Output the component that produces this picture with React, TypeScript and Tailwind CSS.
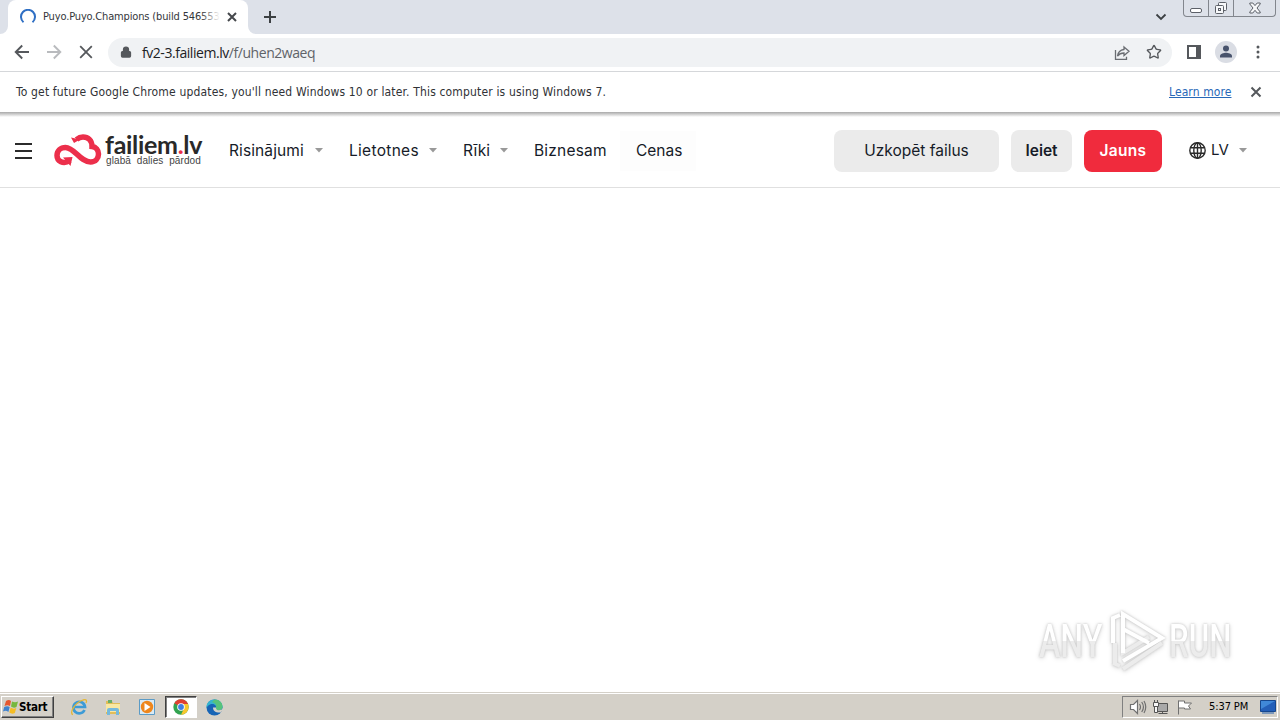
import type { ReactNode } from "react";
import { Lock, Star } from "lucide-react";
import { clsx } from "clsx";

const NAV_ITEMS = [
  { label: "Risinājumi", menu: true, width: "w-[120px]", tracking: "tracking-[0.1px]" },
  { label: "Lietotnes", menu: true, width: "w-[114px]", tracking: "tracking-[0.3px]" },
  { label: "Rīki", menu: true, width: "w-[71px]", tracking: "tracking-[-0.1px]" },
  { label: "Biznesam", menu: false, width: "w-[86px]", tracking: "tracking-[0.2px]" },
];

function Caret() {
  return (
    <svg width="8" height="5" viewBox="0 0 8 5" className="shrink-0">
      <path d="M0 0h8L4 4.5z" fill="#999" />
    </svg>
  );
}

function TabStrip() {
  return (
    <div className="flex h-[34px] items-start bg-[#dde1e9]">
      <div className="relative ml-2 flex h-[34px] w-[240px] items-center rounded-t-lg bg-white pl-3">
        <svg width="8" height="8" className="absolute bottom-0 -left-2">
          <path d="M8 0v8H0a8 8 0 0 0 8-8" fill="#fff" />
        </svg>
        <svg width="8" height="8" className="absolute -right-2 bottom-0">
          <path d="M0 0v8h8a8 8 0 0 1-8-8" fill="#fff" />
        </svg>
        <svg width="16" height="16" viewBox="0 0 16 16" className="shrink-0">
          <path d="M3.500 13.200A7 7 0 1 1 12.500 13.200" fill="none" stroke="#2f6fc4" strokeWidth="2" />
        </svg>
        <div className="relative ml-[7px] w-[177px] overflow-hidden text-[11px] leading-4 tracking-[-0.15px] whitespace-nowrap text-[#34363a]">
          Puyo.Puyo.Champions (build 546553
          <span className="absolute inset-y-0 right-0 w-5 bg-linear-to-r from-transparent to-white" />
        </div>
        <svg width="10" height="10" viewBox="0 0 10 10" stroke="#45484c" strokeWidth="2" className="ml-[7px] shrink-0">
          <path d="m1 1 8 8M9 1 1 9" />
        </svg>
      </div>
      <svg width="14" height="14" viewBox="0 0 14 14" className="mt-[10px] ml-[15px]">
        <path d="M7 1v12M1 7h12" stroke="#3c4043" strokeWidth="2" />
      </svg>
      <svg width="12" height="8" viewBox="0 0 12 8" className="mt-[13px] ml-auto">
        <path d="M1.500 1.500 6 6l4.500-4.500" fill="none" stroke="#3c4043" strokeWidth="1.800" />
      </svg>
      <div className="mr-[4px] ml-[16px] flex h-[17px] w-[93px] rounded-b-[4px] border border-t-0 border-[#82868d] text-[#5c6068]">
        <div className="flex w-[25px] items-end justify-center border-r border-[#82868d] pb-[3px]">
          <span className="h-[5px] w-[12px] rounded-[2px] border border-[#5c6068] bg-white" />
        </div>
        <div className="flex w-[25px] items-center justify-center border-r border-[#82868d]">
          <svg width="14" height="14" viewBox="0 0 14 14" fill="#f7f8fa" stroke="currentColor">
            <rect x="4.500" y="1.500" width="8" height="8" rx="1" />
            <rect x="1.500" y="4.500" width="8" height="8" rx="1" />
            <rect x="4.500" y="7.500" width="2" height="2" />
          </svg>
        </div>
        <div className="flex flex-1 items-center justify-center">
          <svg width="12" height="12" viewBox="0 0 12 12" fill="#f7f8fa" stroke="currentColor">
            <path d="M.8 1h3L6 3.600 8.200 1h3v1L8 6l3.200 4v1h-3L6 8.300 3.800 11h-3v-1L4 6 .8 2z" />
          </svg>
        </div>
      </div>
    </div>
  );
}

function Toolbar() {
  return (
    <div className="flex h-[38px] items-center border-b border-[#d5d7da] bg-white">
      <svg width="16" height="16" viewBox="0 0 16 16" fill="none" stroke="#55585c" strokeWidth="1.900" className="mb-px ml-[14px]">
        <path d="M15 8H2M8.200 1.500 1.700 8l6.500 6.500" />
      </svg>
      <svg width="16" height="16" viewBox="0 0 16 16" fill="none" stroke="#b9bbbe" strokeWidth="1.900" className="mb-px ml-[16px]">
        <path d="M1 8h13M7.800 1.500 14.300 8l-6.500 6.500" />
      </svg>
      <svg width="14" height="14" viewBox="0 0 14 14" stroke="#55585c" strokeWidth="1.800" className="mb-px ml-[17px]">
        <path d="m1.200 1.200 11.600 11.600M12.800 1.200 1.200 12.800" />
      </svg>
      <div className="ml-[15px] flex h-[29px] w-[1064px] items-center rounded-full bg-[#f0f2f4] pl-[12px]">
        <Lock size={12} strokeWidth={2.5} className="mb-px fill-[#55585c] text-[#55585c]" />
        <span className="ml-[10px] w-[176px] font-['Open_Sans','Noto_Sans',sans-serif] text-[14px] leading-5 tracking-[-0.45px] whitespace-nowrap text-[#5f6368]">
          <span className="text-[#202124]">fv2-3.failiem.lv</span>/f/uhen2waeq
        </span>
        <svg width="16" height="16" viewBox="0 0 16 16" fill="none" stroke="#6a6d72" strokeWidth="1.300" className="ml-auto">
          <path d="M1.500 5v9.300h11v-2.500M10 2l5 4.300-5 4.200V8c-3 0-5 1-6.500 3C4 7.500 6 5 10 4.500z" />
        </svg>
        <Star size={16} strokeWidth={2} className="mr-[10px] mb-px ml-[16px] text-[#55585c]" />
      </div>
      <svg width="14" height="14" viewBox="0 0 14 14" className="mb-[2px] ml-[15px]">
        <path d="M1 1h12v12H1z" fill="none" stroke="#55585c" strokeWidth="2" />
        <path d="M9 1h4v12H9z" fill="#55585c" />
      </svg>
      <svg width="22" height="22" viewBox="0 0 22 22" className="mb-[2px] ml-[14px]">
        <circle cx="11" cy="11" r="11" fill="#dadde4" />
        <circle cx="11" cy="7.500" r="3" fill="#48536c" />
        <path d="M5 16.500v-1.500c0-2.200 4-3.200 6-3.200s6 1 6 3.200v1.500z" fill="#48536c" />
      </svg>
      <svg width="4" height="14" viewBox="0 0 4 14" fill="#55585c" className="mb-px ml-[19px]">
        <circle cx="2" cy="2" r="1.500" />
        <circle cx="2" cy="7" r="1.500" />
        <circle cx="2" cy="12" r="1.500" />
      </svg>
    </div>
  );
}

function UpdateNotice() {
  return (
    <div className="flex h-[40px] items-center bg-white px-4 text-[12px] leading-4 text-[#303236]">
      <span className="w-[700px] tracking-[0.16px] whitespace-nowrap">
        To get future Google Chrome updates, you'll need Windows 10 or later. This computer is using Windows 7.
      </span>
      <a className="ml-auto w-[63px] tracking-[0.1px] whitespace-nowrap text-[#2768b8] underline">Learn more</a>
      <svg width="12" height="12" viewBox="0 0 12 12" stroke="#55585c" strokeWidth="2" className="mr-[2px] ml-[18px]">
        <path d="m1.500 1.500 9 9M10.500 1.500l-9 9" />
      </svg>
    </div>
  );
}

function Logo() {
  return (
    <div className="flex h-[34px] w-[150px] items-start">
      <svg width="48" height="34" viewBox="0 0 48 34" className="shrink-0">
        <path
          d="M16 27.500C9 32 3 28 3 22.500 3 18 6.500 14.500 11.500 14.500c9 0 14.500 14.500 25 14.500 5 0 8-3.500 8-8 0-4-2.500-7-6.500-7.500C38 7.500 34 4 29 4c-3 0-4.500.8-6.500 2.500"
          fill="none"
          stroke="#ec2f4b"
          strokeWidth="5.500"
        />
        <path d="m9 24.500 9.500-.5-2 9zM17 4.500l3 5.500 6-3.500z" fill="#ec2f4b" />
      </svg>
      <div className="ml-[3px]">
        <div className="h-[23px] w-[100px] font-['Lato',sans-serif] text-[25px] leading-[23px] font-bold tracking-[-0.3px] whitespace-nowrap text-[#292929]">
          failiem<span className="text-[#ec2f4b]">.</span>lv
        </div>
        <div className="ml-px font-['Liberation_Sans',sans-serif] text-[10px] leading-[10px] tracking-[0.1px] whitespace-pre text-[#444]">
          glabā  dalies  pārdod
        </div>
      </div>
    </div>
  );
}

function HeaderButton({ className, children }: { className?: string; children: ReactNode }) {
  return (
    <button className={clsx("flex h-[42px] shrink-0 items-center justify-center rounded-lg whitespace-nowrap", className)}>
      {children}
    </button>
  );
}

function SiteHeader() {
  return (
    <header className="flex h-[76px] shrink-0 items-center border-b border-[#e0e0e0] bg-linear-to-b from-[#a9a9a9] via-white via-[5px] to-white pt-[2px] font-['Inter',sans-serif] text-[15.5px] text-[#161b28]">
      <div className="ml-[15px] flex w-[17px] flex-col gap-[5px]">
        <span className="h-[2px] bg-[#2b2b2b]" />
        <span className="h-[2px] bg-[#2b2b2b]" />
        <span className="h-[2px] bg-[#2b2b2b]" />
      </div>
      <div className="mb-[2px] ml-[22px]">
        <Logo />
      </div>
      <nav className="ml-[25px] flex items-center">
        {NAV_ITEMS.map((item) => (
          <div key={item.label} className={clsx("flex items-center whitespace-nowrap", item.width, item.tracking)}>
            <span>{item.label}</span>
            {item.menu ? (
              <span className="mr-[26px] ml-auto flex">
                <Caret />
              </span>
            ) : null}
          </div>
        ))}
        <div className="flex h-[40px] w-[76px] items-center bg-[#fdfdfd] pl-[16px]">Cenas</div>
      </nav>
      <div className="ml-auto flex items-center gap-3">
        <HeaderButton className="w-[165px] bg-[#ebebeb]">Uzkopēt failus</HeaderButton>
        <HeaderButton className="w-[61px] bg-[#ebebeb] font-semibold">Ieiet</HeaderButton>
        <HeaderButton className="w-[78px] bg-[#f02b3d] font-semibold tracking-[0.3px] text-white">Jauns</HeaderButton>
      </div>
      <div className="mr-[33px] ml-[27px] flex w-[58px] items-center">
        <svg width="17" height="17" viewBox="0 0 17 17" fill="none" stroke="#2b2b2b" strokeWidth="1.400" className="shrink-0">
          <circle cx="8.500" cy="8.500" r="7.700" />
          <ellipse cx="8.500" cy="8.500" rx="3.700" ry="7.700" />
          <path d="M1.500 5.700h14M1.500 11.300h14M8.500 1v15" />
        </svg>
        <span className="ml-[5px] text-[15px]">LV</span>
        <span className="ml-auto flex">
          <Caret />
        </span>
      </div>
    </header>
  );
}

function Watermark() {
  return (
    <div className="mr-[43px] mb-[18px] flex h-[66px] w-[198px] items-center font-['Roboto',sans-serif] text-[46px] leading-none font-medium [filter:drop-shadow(0_0_1px_#c4c4c4)_drop-shadow(0_1px_2px_#ddd)]">
      <span className="flex w-[66px] shrink-0">
        <span className="origin-left scale-x-[0.7] bg-linear-to-b from-white from-50% to-[#ececec] to-50% bg-clip-text text-transparent">
          ANY
        </span>
      </span>
      <svg width="62" height="64" viewBox="0 0 62 64" fill="none" strokeWidth="4" className="shrink-0">
        <path d="M8 54l7 3M18 60l39-26M10 34v20M18 34v10l26-16" stroke="#ececec" />
        <path d="M18 44V5l39 24-39 23M18 20l26 14M8 34V9l7-3" stroke="#fff" />
      </svg>
      <span className="ml-[2px] flex w-[68px] shrink-0">
        <span className="origin-left scale-x-[0.68] bg-linear-to-b from-white from-50% to-[#ececec] to-50% bg-clip-text text-transparent">
          RUN
        </span>
      </span>
    </div>
  );
}

function WindowsFlag() {
  return (
    <svg width="16" height="16" viewBox="0 0 16 16" className="shrink-0">
      <path d="M3 2q3-2 5 0L7 7Q4.500 5.500 1.500 7z" fill="#e5572f" />
      <path d="M9 2.500q3 1.500 6 0L13.500 8q-3 1.500-5.500-.5z" fill="#76b83f" />
      <path d="M1.200 8q3-1.500 5.500 0l-1.300 5q-2.500-2-5.400-.5z" fill="#3f82ce" />
      <path d="M7.700 8.500q2.500 2 5.600.5l-1.500 5q-3 1.500-5.500-.5z" fill="#f5bd25" />
    </svg>
  );
}

function ExplorerIcon() {
  return (
    <svg width="18" height="18" viewBox="0 0 18 18" fill="none">
      <path d="M14.500 12A5.800 5.800 0 1 1 15 9H5" stroke="#3d9bd6" strokeWidth="2.700" />
      <path d="M3 16.500C-1 16 4 5 13 2c4-1 4 1 3 3" stroke="#e5b735" strokeWidth="1.300" />
    </svg>
  );
}

function FolderIcon() {
  return (
    <svg width="18" height="18" viewBox="0 0 18 18">
      <path d="M2 3h6l1 2h7v11H2z" fill="#e1bd58" />
      <path d="M4 2h4v3H4z" fill="#69ae66" />
      <path d="M2 6h14v8H2z" fill="#f9e8a2" />
      <path d="M3 17v-5q0-2 2-2h8q2 0 2 2v5h-3v-4H6v4z" fill="#75b9dc" />
    </svg>
  );
}

function MediaPlayerIcon() {
  return (
    <svg width="18" height="18" viewBox="0 0 18 18">
      <path d="M1.500 1.500h15v15h-15z" fill="#d9eaf5" stroke="#5b9bc6" />
      <circle cx="9" cy="9" r="6.200" fill="#ee861c" />
      <path d="m6.500 5 6 4-6 4z" fill="#fff" />
    </svg>
  );
}

function ChromeIcon() {
  return (
    <svg width="16" height="16" viewBox="0 0 16 16">
      <circle cx="8" cy="8" r="7.700" fill="#32a350" />
      <path d="M8 8 1.300 4.200A7.700 7.700 0 0 1 14.700 4.200L15 5H8z" fill="#df4032" />
      <path d="M8 5h7A7.700 7.700 0 0 1 8 15.700L11 9.500z" fill="#f8c72d" />
      <circle cx="8" cy="8" r="3.800" fill="#fff" />
      <circle cx="8" cy="8" r="2.900" fill="#3f7fe2" />
    </svg>
  );
}

function EdgeIcon() {
  return (
    <svg width="17" height="17" viewBox="0 0 17 17">
      <circle cx="8.500" cy="8.500" r="8" fill="#1764b5" />
      <path d="M.5 9C0 3.500 4 .5 8.500.5c5 0 8 3.500 8 7 0 3-2.500 4-5 4-2 0-3-1-1.500-2.500C11 6 7 4 4 5.500 2 6.500.8 8 .5 9" fill="#35b5cf" />
      <path d="M8.500.5c5 0 8 3.500 8 7 0 3-2.500 4-5 4-2 0-3-1-1.500-2.500 1-3-1-5-4-6" fill="#57c37b" />
      <path d="M7 8.500c0 4 3.500 5.500 8 5l1.500-2.500 1 1V9c-2 3-8 3-7.500-.5z" fill="#d4d0c8" />
    </svg>
  );
}

function Tray() {
  return (
    <div className="mt-px mr-[2px] ml-auto flex h-[22px] w-[156px] items-center border border-t-[#808080] border-r-white border-b-white border-l-[#808080] pl-[6px]">
      <svg width="18" height="16" viewBox="0 0 18 16" fill="none" stroke="#707070" strokeWidth="1.200">
        <path d="M1.500 5.500h3l4-4v13l-4-4h-3z" fill="#fff" />
        <path d="M10.500 5q2 3 0 6M12.700 3q3.500 5 0 10M15 2q3.500 6 0 12" />
      </svg>
      <svg width="17" height="16" viewBox="0 0 17 16" className="ml-[5px]" stroke="#555">
        <path d="M4.500 4.500h11v8h-11z" fill="#a9a9a9" />
        <path d="M6.500 14.500h9M10.500 12.500v2" fill="none" />
        <path d="M1.500 3.500h5v4h-5zM2.500 1v2.500M5.500 1v2.500M2.500 7.500h3v6h-3z" fill="#f6f6f6" />
      </svg>
      <svg width="17" height="16" viewBox="0 0 17 16" fill="#fff" stroke="#707070" className="ml-[7px]">
        <path d="M2.500 1.500v14M2.500 2h6v2h7l-3 3 2 3h-6V9h-6z" />
      </svg>
      <span className="ml-[16px] w-[42px] text-[11px] leading-4 tracking-[-0.1px] whitespace-nowrap text-black">5:37 PM</span>
      <svg width="16" height="14" viewBox="0 0 16 14" className="ml-[9px] shrink-0">
        <path d="M.5.500h15v11H.5z" fill="#245fb8" stroke="#16478e" />
        <path d="M1 1h14L1 9z" fill="#4088d8" />
        <path d="M2 12h12v2H2z" fill="#7c98bb" />
      </svg>
    </div>
  );
}

function Taskbar() {
  return (
    <div className="flex h-[28px] shrink-0 items-center border-t border-[#d4d0c8] bg-[#d4d0c8] shadow-[inset_0_1px_0_#fff]">
      <div className="mt-px ml-px flex h-[22px] w-[53px] items-center border border-t-white border-r-[#404040] border-b-[#404040] border-l-white pl-px shadow-[inset_-1px_-1px_0_#808080]">
        <WindowsFlag />
        <span className="text-[11.5px] leading-4 font-bold tracking-[-0.25px] text-black">Start</span>
      </div>
      <div className="mt-px ml-[16px] flex items-center">
        <ExplorerIcon />
        <span className="ml-[16px]">
          <FolderIcon />
        </span>
        <span className="ml-[16px]">
          <MediaPlayerIcon />
        </span>
        <div className="ml-[9px] flex h-[22px] w-[32px] items-center justify-center border border-t-[#404040] border-r-white border-b-white border-l-[#404040] bg-white shadow-[inset_1px_1px_0_#808080]">
          <ChromeIcon />
        </div>
        <span className="ml-[9px]">
          <EdgeIcon />
        </span>
      </div>
      <Tray />
    </div>
  );
}

export default function App() {
  return (
    <div className="flex h-[720px] w-[1280px] flex-col overflow-hidden bg-white font-['DejaVu_Sans_Condensed','DejaVu_Sans',sans-serif]">
      <TabStrip />
      <Toolbar />
      <UpdateNotice />
      <SiteHeader />
      <main className="flex flex-1 items-end justify-end">
        <Watermark />
      </main>
      <Taskbar />
    </div>
  );
}
